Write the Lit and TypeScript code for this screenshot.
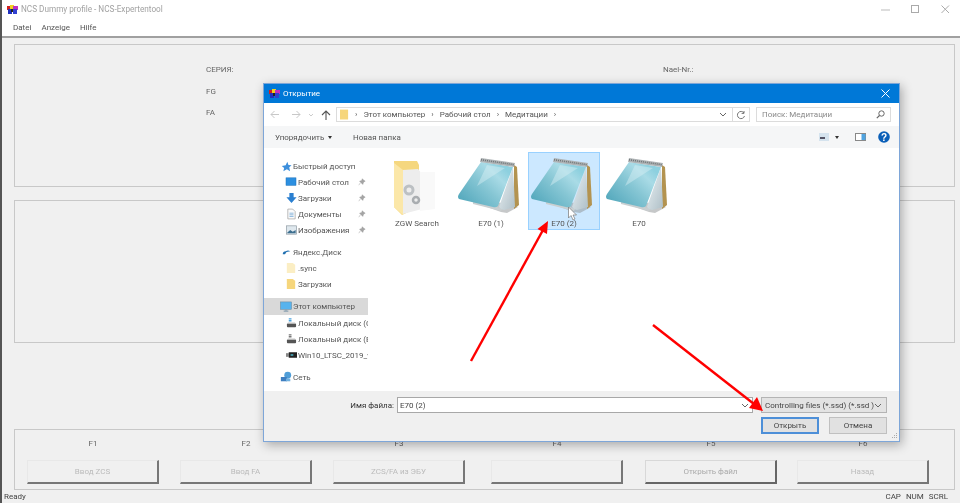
import { LitElement, html, css, svg } from "lit";
import { customElement } from "lit/decorators.js";

const appIcon = html`<svg class="appicon" viewBox="0 0 11 9" width="11" height="9"><rect x="0" y="1" width="4" height="4" fill="#d02020"/><rect x="3" y="0" width="4" height="5" fill="#f0d020"/><rect x="6" y="1" width="5" height="4" fill="#c030c0"/><rect x="1" y="4" width="4" height="5" fill="#2030c0"/><rect x="6" y="4" width="4" height="5" fill="#3040d0"/><rect x="4" y="4" width="2" height="3" fill="#222"/></svg>`;

const notepad = (id: string) => html`<svg class="big np" viewBox="0 0 62 62" width="62" height="62">
  <defs>
    <linearGradient id="c${id}" x1="0.05" y1="0.85" x2="0.85" y2="0.15"><stop offset="0" stop-color="#55a9bd"/><stop offset="0.5" stop-color="#86c6d4"/><stop offset="0.8" stop-color="#a9dbe6"/><stop offset="1" stop-color="#8dd0df"/></linearGradient>
    <linearGradient id="p${id}" x1="0" y1="0" x2="1" y2="1"><stop offset="0" stop-color="#eef4f6"/><stop offset="1" stop-color="#aebfc7"/></linearGradient>
  </defs>
  <path d="M16 46 L44 56 L50 57 L61 51 L50 47 Z" fill="#8d9293" opacity=".5"/>
  <path d="M57 9 L60 11 L62 49 L57 53 Z" fill="#b39350"/>
  <path d="M16 44 L40 51 L45 53 L44 55 L16 48 Z" fill="#c9cfd1"/>
  <path d="M56 11 L42 51 Q44 54 47 54 L58 51 Z" fill="url(#p${id})"/>
  <path d="M24 6 L56 11 L41 50 Q39 52 36 51 L2 43 Q0 41 2 38 Z" fill="url(#c${id})"/>
  <path d="M30 9 L48 12 L20 30 Z" fill="#d9eff3" opacity=".45"/>
  <path d="M24 2 L58 7 L57 11 L23 6 Z" fill="#aeb3b5"/>
  <path d="M24 3.8 L57.6 8.8" stroke="#6f7476" stroke-width="1.5" stroke-dasharray="1 1" fill="none"/>
</svg>`;

const bigFolder = html`<svg class="big fd" viewBox="0 0 44 58" width="44" height="58">
  <path d="M1 2 H24 L26 6 V48 L9 56 L1 48 Z" fill="#f5d77f"/>
  <path d="M10 11 L25 10 L29 15 V50 L10 55 Z" fill="#ededed"/>
  <path d="M27 13 H42 V50 L27 52 Z" fill="#f9f9f9"/>
  <path d="M1 4 L10 11 V56 L1 48 Z" fill="#fbe7a8"/>
  <circle cx="16" cy="31" r="4" fill="none" stroke="#bcc0c3" stroke-width="3"/>
  <circle cx="23" cy="41" r="3" fill="none" stroke="#a9adb0" stroke-width="2.5"/>
</svg>`;

const folder = (c: string) => html`<svg viewBox="0 0 12 14" width="10" height="12"><path d="M1 1 H8 L11 3 V13 H1 Z" fill="${c}"/></svg>`;
const pin = html`<svg class="pin" viewBox="0 0 10 10" width="8" height="8"><path d="M5 1 L9 4 L7 5 L6 8 L2 4 L5 3 Z M3 6 L1 9" fill="#a5a5a5" stroke="#999" stroke-width=".6"/></svg>`;
const ic = {
  star: html`<svg viewBox="0 0 14 14" width="11" height="11"><path d="M8 1 L9.5 5 L13.5 5.5 L10.5 8 L11.5 13 L7.5 10.5 L3 13 L4 9 L1 6.5 L6 5.5 Z" fill="#3d8fdc"/></svg>`,
  desk: html`<svg viewBox="0 0 13 12" width="12" height="10"><rect x="0.5" y="1" width="12" height="9" fill="#2c8fe0" stroke="#1a6fb8" stroke-width=".6"/></svg>`,
  down: html`<svg viewBox="0 0 13 14" width="11" height="12"><path d="M4 1 H9 V6 H12.5 L6.5 13 L.5 6 H4 Z" fill="#2a7fd0"/></svg>`,
  doc: html`<svg viewBox="0 0 11 14" width="9" height="12"><path d="M1 1 H7 L10 4 V13 H1 Z" fill="#fafafa" stroke="#9a9a9a" stroke-width=".8"/><path d="M3 6 H8 M3 8 H8 M3 10 H8" stroke="#5a9ad0" stroke-width=".8"/></svg>`,
  img: html`<svg viewBox="0 0 13 12" width="11" height="10"><rect x=".5" y="1" width="12" height="10" fill="#dfe8ee" stroke="#8a97a0" stroke-width=".8"/><path d="M1.5 9 L5 6 L8 8 L11.5 6 V10 H1.5 Z" fill="#3d6f8f"/></svg>`,
  yandex: html`<svg viewBox="0 0 12 10" width="9" height="8"><path d="M1 8 Q1 4 5 4 Q8 2 11 4 L6 5 L4 8 Z" fill="#1f6fb0"/></svg>`,
  pc: html`<svg viewBox="0 0 13 13" width="12" height="12"><rect x=".5" y="1" width="12" height="8" fill="#57b3ee" stroke="#6a8aa0" stroke-width=".6"/><path d="M4 11 H9 M6.5 9 V11" stroke="#8aa0b0" stroke-width="1.2"/></svg>`,
  disk: (c: string) => html`<svg viewBox="0 0 12 12" width="11" height="11"><path d="M3 3 H6 M3 1 H6" stroke="${c}" stroke-width="1.4"/><rect x="1" y="6" width="10" height="4" rx="1" fill="#555"/><rect x="2" y="5" width="8" height="1.4" fill="#bbb"/></svg>`,
  usb: html`<svg viewBox="0 0 12 8" width="11" height="8"><rect x="0" y="2" width="3" height="4" fill="#888"/><rect x="3" y="1" width="9" height="6" fill="#222"/><rect x="5" y="3" width="3" height="2" fill="#49a"/></svg>`,
  net: html`<svg viewBox="0 0 14 14" width="12" height="12"><circle cx="9" cy="5" r="4" fill="#4f9ed8"/><rect x="1" y="7" width="7" height="5" fill="#3f7fc0"/><rect x="7" y="9" width="5" height="3" fill="#6fb0e0"/></svg>`,
};

const side = [
  { t: "Быстрый доступ", i: ic.star, lv: 1 },
  { t: "Рабочий стол", i: ic.desk, lv: 2, pin: true },
  { t: "Загрузки", i: ic.down, lv: 2, pin: true },
  { t: "Документы", i: ic.doc, lv: 2, pin: true },
  { t: "Изображения", i: ic.img, lv: 2, pin: true },
  { t: "Яндекс.Диск", i: ic.yandex, lv: 1, sec: true },
  { t: ".sync", i: folder("#fbeec4"), lv: 2 },
  { t: "Загрузки", i: folder("#f6d67c"), lv: 2 },
  { t: "Этот компьютер", i: ic.pc, lv: 1, sec: true, sel: true },
  { t: "Локальный диск (C", i: ic.disk("#4aa3df"), lv: 2 },
  { t: "Локальный диск (E", i: ic.disk("#777"), lv: 2 },
  { t: "Win10_LTSC_2019_v", i: ic.usb, lv: 2 },
  { t: "Сеть", i: ic.net, lv: 1, sec: true },
];

const keys = [
  { k: "F1", b: "Ввод ZCS" },
  { k: "F2", b: "Ввод FA" },
  { k: "F3", b: "ZCS/FA из ЭБУ" },
  { k: "F4", b: "" },
  { k: "F5", b: "Открыть файл", on: true },
  { k: "F6", b: "Назад" },
];

const tiles = [
  { t: "ZGW Search", i: bigFolder },
  { t: "E70 (1)", i: notepad("a") },
  { t: "E70 (2)", i: notepad("b"), sel: true },
  { t: "E70", i: notepad("c") },
];

@customElement("app-root")
export class AppRoot extends LitElement {
  static styles = css`
    :host { display: block; position: relative; width: 960px; height: 503px; overflow: hidden; background: #f0f0f0; font-family: Roboto, "Liberation Sans", Arial, sans-serif; font-size: 8px; color: #555; filter: blur(0.35px); }
    .win { display: flex; flex-direction: column; height: 503px; border-left: 2px solid #555; box-sizing: border-box; }
    .titlebar { height: 18px; background: #fff; display: flex; align-items: center; padding-left: 5px; gap: 3px; color: #a2a2a2; flex: none; font-size: 8.2px; }
    .appicon { flex: none; }
    .spacer { flex: 1; }
    .ctl { width: 30px; margin-left: -3px; display: flex; justify-content: center; }
    .menu { height: 18px; background: #fff; display: flex; align-items: center; gap: 10px; padding-left: 11px; border-bottom: 2px solid #a0a0a0; flex: none; color: #555; }
    .body { flex: 1; display: flex; flex-direction: column; padding: 6px 5px 0 12px; }
    .group { border: 1px solid #c8c8c8; box-sizing: border-box; }
    .g1 { height: 143px; display: grid; grid-template-columns: 191px 457px 1fr; grid-auto-rows: 21.5px; padding-top: 20px; color: #666; }
    .g2 { height: 143px; margin-top: 13px; }
    .g3 { height: 61px; margin-top: 86px; display: grid; grid-template-columns: 132px 132px 132px 132px 132px 132px; padding: 0 0 0 12px; grid-template-rows: 30px 24px; }
    .g3 > *:nth-child(6n+2) { margin-left: 21px; }
    .g3 > *:nth-child(6n+3) { margin-left: 42px; }
    .g3 > *:nth-child(6n+4) { margin-left: 68px; }
    .g3 > *:nth-child(6n+5) { margin-left: 90px; }
    .g3 > *:nth-child(6n) { margin-left: 110px; }
    .g3 > * { width: 132px; }
    .k { text-align: center; line-height: 27px; color: #666; }
    .btn { border: 1px solid #e8e8e8; border-right: 2px solid #777; border-bottom: 2px solid #777; box-sizing: border-box; display: flex; align-items: center; justify-content: center; color: #bbb; }
    .btn.on { border-color: #d8d8d8 #666 #666 #d8d8d8; color: #aaa; }
    .status { height: 13px; display: flex; align-items: center; padding-left: 2px; flex: none; color: #444; }
    .status span.r { margin-left: 5px; }
    .dlg { position: absolute; left: 263px; top: 83px; width: 637px; height: 359px; box-sizing: border-box; border: 1px solid #7ea6d8; background: #fff; box-shadow: 2px 3px 10px rgba(0,0,0,.3); display: flex; flex-direction: column; }
    .dt { height: 19px; background: #0078d7; color: #fff; display: flex; align-items: center; padding: 0 9px 0 5px; gap: 3px; flex: none; }
    .dnav { height: 23px; display: flex; align-items: center; flex: none; padding: 0 8px 0 0; }
    .navb { width: 21px; display: flex; justify-content: center; }
    .navb.s { width: 9px; }
    .path { flex: 1; height: 15px; border: 1px solid #dcdcdc; box-sizing: border-box; display: flex; align-items: center; gap: 6px; padding-left: 3px; color: #555; }
    .path .sep { font-size: 8px; color: #555; }
    .path .chev { margin-left: auto; display: flex; align-items: center; gap: 5px; height: 100%; }
    .refresh { border-left: 1px solid #dcdcdc; height: 100%; width: 16px; display: flex; align-items: center; justify-content: center; }
    .search { width: 135px; height: 15px; border: 1px solid #dcdcdc; box-sizing: border-box; margin-left: 6px; display: flex; align-items: center; padding: 0 5px; color: #8a8a8a; justify-content: space-between; }
    .tools { height: 22px; background: #f5f6f7; display: flex; align-items: center; flex: none; padding: 0 9px 0 11px; color: #555; }
    .tools .a { display: flex; align-items: center; gap: 4px; width: 78px; }
    .caret { width: 0; height: 0; border: 2.5px solid transparent; border-top: 3px solid #333; border-bottom: 0; }
    .tr { margin-left: auto; display: flex; align-items: center; }
    .main { flex: 1; display: flex; min-height: 0; }
    .sidebar { width: 104px; flex: none; padding-top: 10px; overflow: hidden; }
    .row { height: 16px; display: flex; align-items: center; white-space: nowrap; color: #555; position: relative; overflow: hidden; }
    .row.l1 { padding-left: 16px; }
    .row.l2 { padding-left: 21px; }
    .row.sec { margin-top: 6px; }
    .row.sel { background: #d9d9d9; height: 17px; }
    .row .ico { width: 12px; display: flex; justify-content: center; margin-right: 1px; flex: none; }
    .pin { position: absolute; right: 2px; top: 4px; }
    .files { flex: 1; display: flex; align-items: flex-start; padding: 4px 0 0 12px; }
    .tile { width: 74px; height: 78px; box-sizing: border-box; display: flex; flex-direction: column; align-items: center; padding-top: 4px; color: #555; }
    .tile .np { flex: none; margin-right: 6px; }
    .tile .fd { flex: none; margin-top: 3px; margin-bottom: 1px; margin-right: 4px; }
    .tile.sel { background: #cce8ff; border: 1px solid #99d1ff; padding-top: 3px; width: 72px; margin-right: 2px; }
    .tile .lb { margin-top: 1px; }
    .bot { height: 50px; background: #f0f0f0; flex: none; display: flex; flex-direction: column; padding: 6px 12px 0 0; box-sizing: border-box; position: relative; }
    .l1r { display: flex; align-items: center; height: 16px; justify-content: flex-end; }
    .lbl { color: #333; margin-right: 3px; }
    .inp { width: 356px; height: 16px; box-sizing: border-box; background: #fff; border: 1px solid #a8a8a8; padding-left: 2px; display: flex; align-items: center; justify-content: space-between; padding-right: 3px; color: #444; margin-right: 8px; }
    .sel2 { width: 126px; height: 16px; box-sizing: border-box; background: #e3e3e3; border: 1px solid #b4b4b4; display: flex; align-items: center; justify-content: space-between; padding: 0 4px 0 3px; color: #444; white-space: nowrap; }
    .l2r { display: flex; justify-content: flex-end; gap: 10px; margin-top: 4px; }
    .db { width: 58px; height: 17px; box-sizing: border-box; background: #e1e1e1; border: 1px solid #c0c0c0; display: flex; align-items: center; justify-content: center; color: #444; }
    .db.p { border: 2px solid #4d8fd8; }
    .grip { position: absolute; right: 2px; bottom: 2px; }
    .over { position: absolute; left: 0; top: 0; pointer-events: none; }
  `;

  private chevD = svg`<path d="M1 1 L4 4 L7 1" fill="none" stroke="#666" stroke-width="1"/>`;

  render() {
    return html`
      <div class="win">
        <div class="titlebar">${appIcon}<span>NCS Dummy profile - NCS-Expertentool</span><span class="spacer"></span>
          <span class="ctl"><svg width="9" height="9"><path d="M0 5 H9" stroke="#bbb"/></svg></span>
          <span class="ctl"><svg width="9" height="9"><rect x=".5" y=".5" width="7" height="7" fill="none" stroke="#aaa"/></svg></span>
          <span class="ctl"><svg width="9" height="9"><path d="M.5 .5 L8 8 M8 .5 L.5 8" stroke="#aaa"/></svg></span>
        </div>
        <div class="menu"><span>Datei</span><span>Anzeige</span><span>Hilfe</span></div>
        <div class="body">
          <div class="group g1">
            <span></span><span>СЕРИЯ:</span><span>Nael-Nr.:</span>
            <span></span><span>FG</span><span></span>
            <span></span><span>FA</span><span></span>
          </div>
          <div class="group g2"></div>
          <div class="group g3">
            ${keys.map(k => html`<div class="k">${k.k}</div>`)}
            ${keys.map(k => html`<div class="btn ${k.on ? "on" : ""}">${k.b}</div>`)}
          </div>
        </div>
        <div class="status"><span>Ready</span><span class="spacer"></span><span class="r">CAP</span><span class="r">NUM</span><span class="r">SCRL</span><span style="width:12px"></span></div>
      </div>

      <div class="dlg">
        <div class="dt">${appIcon}<span>Открытие</span><span class="spacer"></span>
          <svg width="9" height="9"><path d="M.5 .5 L8.5 8.5 M8.5 .5 L.5 8.5" stroke="#fff" stroke-width="1"/></svg></div>
        <div class="dnav">
          <span class="navb"><svg width="10" height="9"><path d="M9 4.5 H1 M4.5 1 L1 4.5 L4.5 8" fill="none" stroke="#c8c8c8"/></svg></span>
          <span class="navb"><svg width="10" height="9"><path d="M1 4.5 H9 M5.5 1 L9 4.5 L5.5 8" fill="none" stroke="#c8c8c8"/></svg></span>
          <span class="navb s"><svg width="6" height="4"><path d="M1 1 L3 3 L5 1" fill="none" stroke="#ccc"/></svg></span>
          <span class="navb"><svg width="10" height="10"><path d="M5 10 V1 M1 5 L5 1 L9 5" fill="none" stroke="#555" stroke-width="1.1"/></svg></span>
          <div class="path">
            <svg viewBox="0 0 10 12" width="9" height="12"><path d="M0 0 H9 V11 H0 Z" fill="#f6d67c"/></svg>
            <span class="sep">›</span><span>Этот компьютер</span><span class="sep">›</span><span>Рабочий стол</span><span class="sep">›</span><span>Медитации</span><span class="sep">›</span>
            <span class="chev"><svg width="8" height="5">${this.chevD}</svg><span class="refresh"><svg width="10" height="10" viewBox="0 0 10 10"><path d="M8 3 A3.6 3.6 0 1 0 8.5 6 M8 1 V3.4 H5.6" fill="none" stroke="#777"/></svg></span></span>
          </div>
          <div class="search"><span>Поиск: Медитации</span><svg width="9" height="9" viewBox="0 0 9 9"><circle cx="5.5" cy="3.5" r="2.7" fill="none" stroke="#666"/><path d="M3.5 5.5 L.8 8.2" stroke="#666" stroke-width="1.2"/></svg></div>
        </div>
        <div class="tools">
          <span class="a"><span>Упорядочить</span><span class="caret"></span></span>
          <span>Новая папка</span>
          <span class="tr">
            <svg width="10" height="8"><rect width="10" height="8" fill="#d5e3ee"/><rect x="1" y="4" width="5" height="2" fill="#556"/></svg>
            <span class="caret" style="margin:0 16px 0 6px"></span>
            <svg width="11" height="8"><rect x=".5" y=".5" width="10" height="7" fill="#fff" stroke="#888"/><rect x="6.5" y="1" width="4" height="6" fill="#4fa3e0"/></svg>
            <svg width="12" height="12" style="margin-left:12px"><circle cx="6" cy="6" r="5.8" fill="#0a5fb8"/><text x="6" y="9.6" font-size="10" font-weight="700" fill="#fff" text-anchor="middle" font-family="Liberation Sans">?</text></svg>
          </span>
        </div>
        <div class="main">
          <div class="sidebar">
            ${side.map(s => html`<div class="row l${s.lv} ${s.sec ? "sec" : ""} ${s.sel ? "sel" : ""}"><span class="ico">${s.i}</span><span>${s.t}</span>${s.pin ? pin : ""}</div>`)}
          </div>
          <div class="files">
            ${tiles.map(t => html`<div class="tile ${t.sel ? "sel" : ""}">${t.i}<span class="lb">${t.t}</span></div>`)}
          </div>
        </div>
        <div class="bot">
          <div class="l1r"><span class="lbl">Имя файла:</span>
            <span class="inp"><span>E70 (2)</span><svg width="8" height="5">${this.chevD}</svg></span>
            <span class="sel2"><span>Controlling files (*.ssd) (*.ssd )</span><svg width="8" height="5">${this.chevD}</svg></span></div>
          <div class="l2r"><span class="db p">Открыть</span><span class="db">Отмена</span></div>
          <svg class="grip" width="6" height="6"><path d="M5 0h1v1H5zM3 2h1v1H3zM5 2h1v1H5zM1 4h1v1H1zM3 4h1v1H3zM5 4h1v1H5z" fill="#aaa"/></svg>
        </div>
      </div>

      <svg class="over" width="960" height="503">
        <path d="M568.5 207 V218 L571 215.5 L573 220 L575 219 L573 215 H576.5 Z" fill="#fff" stroke="#777" stroke-width=".7"/>
        <path d="M471 361 L543 230" stroke="#f00" stroke-width="2.4" fill="none"/>
        <path d="M548 221 L547 234 L537.5 229 Z" fill="#f00"/>
        <path d="M653 325 L754 404" stroke="#f00" stroke-width="2.4" fill="none"/>
        <path d="M763 411 L749 408 L757 397 Z" fill="#f00"/>
      </svg>
    `;
  }
}
